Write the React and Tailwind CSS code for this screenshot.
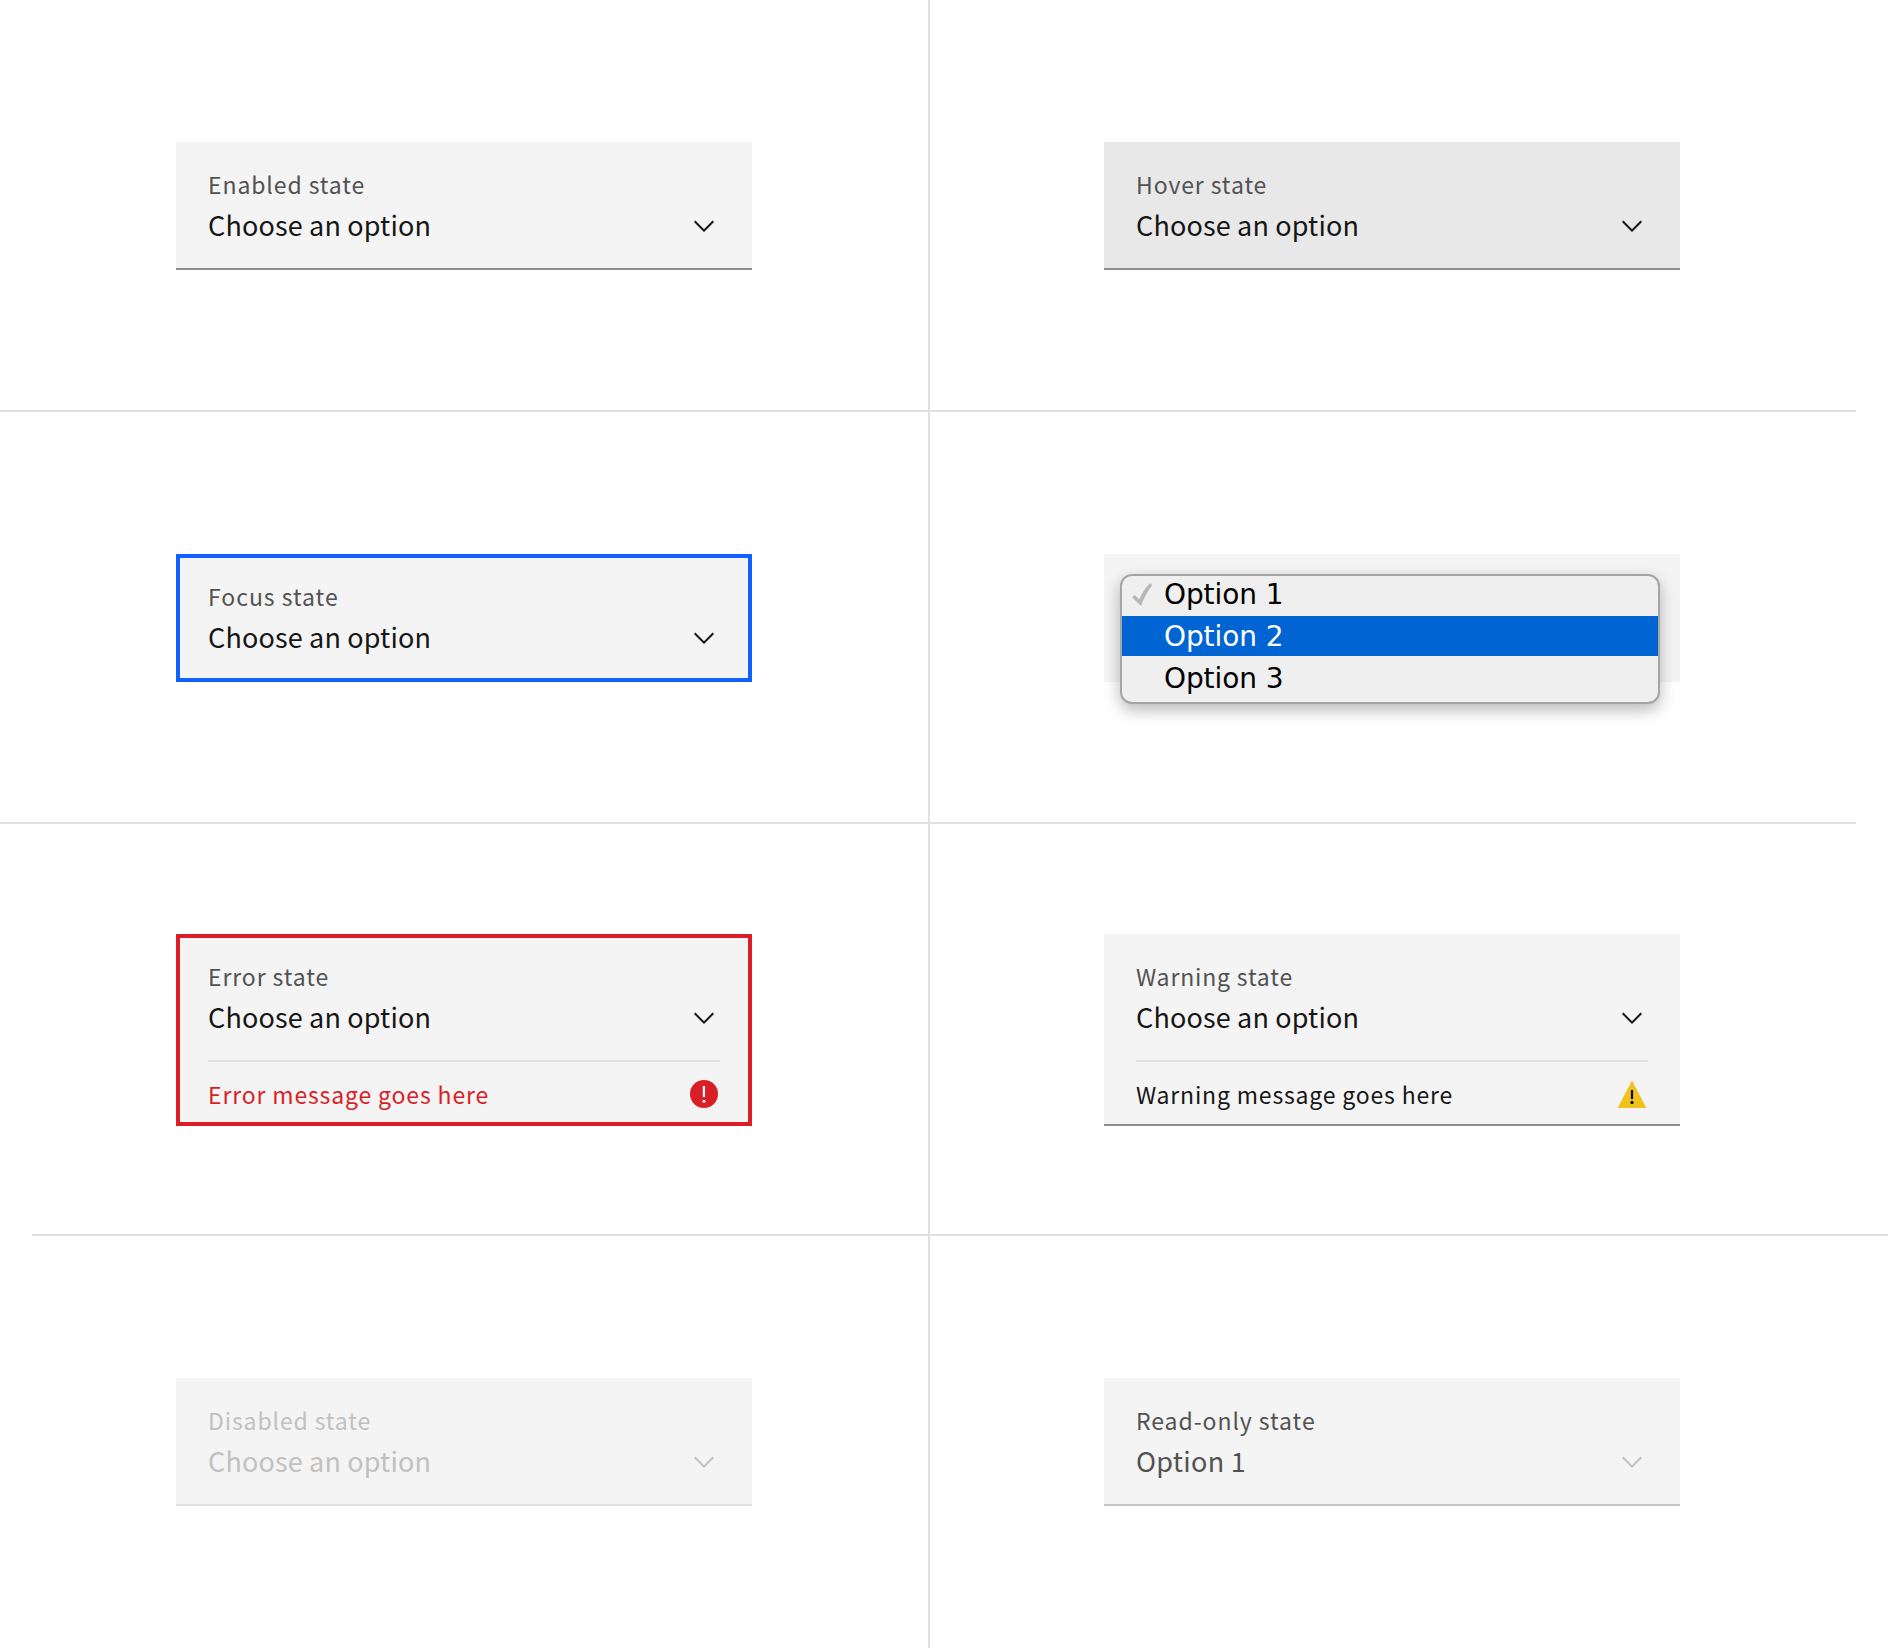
import React from "react";

const cardFont = "font-['Noto_Sans_CJK_JP','IBM_Plex_Sans',sans-serif]";

function Chevron({ className = "" }) {
  return (
    <svg viewBox="0 0 16 16" className={`size-8 shrink-0 ${className}`} fill="currentColor">
      <path d="M8 11 3 6 3.7 5.3 8 9.6 12.3 5.3 13 6z" />
    </svg>
  );
}

function ErrorIcon() {
  return (
    <svg viewBox="0 0 16 16" className="size-8 shrink-0">
      <circle cx="8" cy="8" r="7" fill="#da1e28" />
      <path d="M7.4 4h1.1v5.500H7.4z" fill="#fff" />
      <circle cx="8" cy="11.6" r="0.78" fill="#fff" />
    </svg>
  );
}

function WarningIcon() {
  return (
    <svg viewBox="0 0 16 16" className="size-8 shrink-0">
      <path d="M8 1.2 15 14.6a.3.3 0 0 1-.2.4H1.2a.3.3 0 0 1-.2-.4z" fill="#f1c21b" />
      <path d="M7.45 6h1.1v4.5h-1.1z" fill="#000" />
      <circle cx="8" cy="12.2" r="0.78" fill="#000" />
    </svg>
  );
}

function Select({
  label,
  value = "Choose an option",
  card = "bg-[#f4f4f4] border-b-2 border-[#8d8d8d]",
  labelClass = "text-[#525252] tracking-[0.9px]",
  valueClass = "text-[#161616] tracking-[0.15px]",
  chevronClass = "text-[#161616]",
  message,
  messageClass = "",
  icon,
}) {
  return (
    <div className={`w-[576px] px-8 pt-[26px] ${message ? "h-48" : "h-32"} ${cardFont} ${card}`}>
      <div className={`h-8 text-[23px] leading-8 whitespace-nowrap ${labelClass}`}>{label}</div>
      <div className="mt-[5px] flex h-10 items-center justify-between">
        <div className={`text-[27px] leading-10 whitespace-nowrap ${valueClass}`}>{value}</div>
        <Chevron className={`mt-0.5 ${chevronClass}`} />
      </div>
      {message && (
        <div className="mt-[23px] flex justify-between border-t-2 border-[#e0e0e0] pt-4">
          <div className={`text-[23px] leading-8 whitespace-nowrap ${messageClass}`}>{message}</div>
          {icon}
        </div>
      )}
    </div>
  );
}

function OpenSelect() {
  return (
    <div className="h-32 w-[576px] bg-[#f4f4f4] pt-5 pl-4">
      <div className="h-[130px] w-[540px] overflow-hidden rounded-xl border-2 border-[#a5a5a5] bg-[#efefef] font-['DejaVu_Sans',sans-serif] text-[28px] tracking-[-0.1px] text-black shadow-[0_6px_16px_rgba(0,0,0,0.28)]">
        <div className="flex h-10 pl-2 leading-[38px]">
          <svg viewBox="0 0 26 26" className="mt-1.5 mr-2 size-[26px]" fill="#b8b8b8">
            <path d="M2 15.3 4.7 13l4.6 4.3Q13.5 7.5 20 1.3l2.3 2Q15 12.500 11 24z" />
          </svg>
          <span>Option 1</span>
        </div>
        <div className="h-10 bg-[#0064d2] pt-px pl-[42px] leading-10 text-white">Option 2</div>
        <div className="h-[46px] pt-[3px] pl-[42px] leading-10">Option 3</div>
      </div>
    </div>
  );
}

function Row({ left, right, divider }) {
  return (
    <div className="h-[412px]">
      <div className={`flex w-[1856px] ${divider ? "h-[410px]" : "h-[412px]"}`}>
        <div className="flex w-[928px] items-center justify-center">
          <div className={divider ? "pt-[2px]" : ""}>{left}</div>
        </div>
        <div className="flex w-[928px] items-center justify-center border-l-2 border-[#e0e0e0] pr-[2px]">
          <div className={divider ? "pt-[2px]" : ""}>{right}</div>
        </div>
      </div>
      {divider && <div className={`h-[2px] w-[1856px] bg-[#e0e0e0] ${divider}`} />}
    </div>
  );
}

export default function App() {
  return (
    <main className="h-[1648px] w-[1888px] overflow-hidden bg-white">
      <Row
        divider="ml-0"
        left={<Select label="Enabled state" />}
        right={<Select label="Hover state" card="bg-[#e8e8e8] border-b-2 border-[#8d8d8d]" />}
      />
      <Row
        divider="ml-0"
        left={
          <Select
            label="Focus state"
            card="bg-[#f4f4f4] ring-4 ring-inset ring-[#0f62fe]"
            labelClass="text-[#525252] tracking-[0.97px]"
          />
        }
        right={<OpenSelect />}
      />
      <Row
        divider="ml-8"
        left={
          <Select
            label="Error state"
            card="bg-[#f4f4f4] ring-4 ring-inset ring-[#da1e28]"
            message="Error message goes here"
            messageClass="text-[#da1e28] tracking-[0.85px]"
            icon={<ErrorIcon />}
          />
        }
        right={
          <Select
            label="Warning state"
            labelClass="text-[#525252] tracking-[0.83px]"
            message="Warning message goes here"
            messageClass="text-[#161616] tracking-[0.82px]"
            icon={<WarningIcon />}
          />
        }
      />
      <Row
        left={
          <Select
            label="Disabled state"
            card="bg-[#f4f4f4] border-b-2 border-[#e0e0e0]"
            labelClass="text-[#c1c1c1] tracking-[0.88px]"
            valueClass="text-[#c1c1c1] tracking-[0.15px]"
            chevronClass="text-[#c1c1c1]"
          />
        }
        right={
          <Select
            label="Read-only state"
            value="Option 1"
            card="bg-[#f4f4f4] border-b-2 border-[#c6c6c6]"
            labelClass="text-[#525252] tracking-[0.93px]"
            valueClass="text-[#525252] tracking-[0.3px]"
            chevronClass="text-[#c1c1c1]"
          />
        }
      />
    </main>
  );
}
